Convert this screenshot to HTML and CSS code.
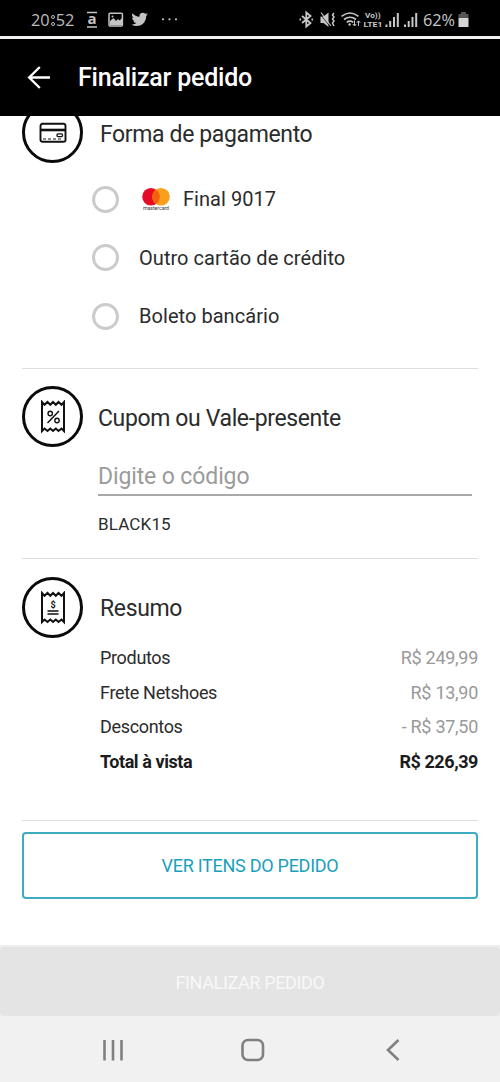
FILE: index.html
```html
<!DOCTYPE html>
<html lang="pt-BR">
<head>
<meta charset="utf-8">
<title>Finalizar pedido</title>
<link rel="stylesheet" href="styles.css">
</head>
<body>
<div class="phone">
  <div class="status">
    <span class="clock">20<span class="colon"><i></i><i></i></span>52</span>
    <svg class="status-left" width="96" height="36" viewBox="84 0 96 36">
      <path d="M87 12.5h10M87 27h10" stroke="#c4c4c4" stroke-width="1.5"/>
      <text x="92" y="24" text-anchor="middle" class="store">a</text>
      <rect x="109" y="13.2" width="13.4" height="12.8" rx="1" fill="none" stroke="#c4c4c4" stroke-width="1.5"/>
      <path d="M110 25v-4l3.5-3 2.5 3 2-2 1.6 1.5L122 18v7z" fill="#c4c4c4"/>
      <circle cx="112.5" cy="16.5" r="1" fill="#c4c4c4"/>
      <path transform="translate(131.5 11.2) scale(.68)" fill="#c4c4c4" d="M23.95 4.57a10 10 0 01-2.82.77 4.96 4.96 0 002.16-2.72c-.95.55-2 .95-3.13 1.18a4.92 4.92 0 00-8.38 4.48C7.69 8.1 4.07 6.13 1.64 3.16a4.92 4.92 0 001.52 6.57 4.9 4.9 0 01-2.23-.61v.06a4.92 4.92 0 003.95 4.83 5 5 0 01-2.21.08 4.94 4.94 0 004.6 3.42A9.87 9.87 0 010 19.54a14 14 0 007.55 2.21c9.05 0 14-7.5 14-13.98l-.02-.64a9.94 9.94 0 002.42-2.56z"/>
      <circle cx="163" cy="19.3" r="1.1" fill="#c4c4c4"/><circle cx="169.5" cy="19.3" r="1.1" fill="#c4c4c4"/><circle cx="176" cy="19.3" r="1.1" fill="#c4c4c4"/>
    </svg>
    <svg class="status-right" width="120" height="36" viewBox="298 0 120 36" fill="none" stroke="#c8c8c8">
      <path d="M302 16l8.500 7-4.200 3.500v-14l4.200 3.500-8.500 7" stroke-width="1.800"/>
      <path d="M299.500 19.500h1.500M311.500 19.500h1.500" stroke-width="1.800"/>
      <path d="M320.500 16.500h3l5-4v14.500l-5-4h-3z" fill="#c8c8c8" stroke="none"/>
      <path d="M320 14l9.500 12" stroke="#000" stroke-width=".7"/>
      <path d="M321 12.500l10 13.500" stroke-width="1.100"/>
      <path d="M334 13l-1.500 2 1.500 2-1.500 2 1.500 2-1.500 2 1.500 3" stroke-width="1.500"/>
      <path d="M341.500 16.300q8.500-6.700 17 0M344 19.500q6-4.600 12 0M346.700 22.300q3.300-2.400 6.600 0" stroke-width="1.600"/>
      <circle cx="349.600" cy="24.500" r="1.200" fill="#c8c8c8" stroke="none"/>
      <path d="M354.500 20.500v5M352.800 24l1.700 2 1.700-2M358.500 26v-5M356.800 22.800l1.700-2 1.700 2" stroke-width="1"/>
      <g fill="#c8c8c8" stroke="none">
        <text x="365" y="18.400" class="volte" textLength="15.500" lengthAdjust="spacingAndGlyphs">Vo))</text>
        <text x="363.500" y="27" class="volte" textLength="19" lengthAdjust="spacingAndGlyphs">LTE1</text>
        <path d="M385.500 24.500h2v2.500h-2zM389.200 21h2v6h-2zM393 17h2v10h-2zM396.800 13h2v14h-2zM404 24.500h2v2.500h-2zM407.700 21h2v6h-2zM411.500 17h2v10h-2zM415.200 13h2v14h-2z"/>
      </g>
    </svg>
    <span class="percent">62%</span>
    <svg class="battery" width="11" height="16" viewBox="0 0 11 16"><path d="M3 0h5v2h2.500v4H.5V2H3z" fill="#555"/><path d="M.5 6h10v9H.5z" fill="#d5d5d5"/></svg>
  </div>

  <header class="appbar">
    <svg width="24" height="24" viewBox="0 0 24 24" fill="none" stroke="#fff" stroke-width="2.400"><path d="M23 11.500H2.500M12.800 1L2.200 11.500l10.600 10.500"/></svg>
    <h1 class="title">Finalizar pedido</h1>
  </header>

  <main class="content">
    <section class="section payment">
      <div class="section-head">
        <span class="badge">
          <svg width="28" height="22" viewBox="0 0 28 22" fill="none" stroke="#111" stroke-width="1.900">
            <path d="M1.500 16V4q0-2.200 2.200-2.200h20.600q2.200 0 2.200 2.200v14q0 1.800-2.200 1.800H3.700q-2.200 0-2.200-2z"/>
            <path d="M2 8h24" stroke-width="2.600"/>
            <path d="M4 17h19" stroke-dasharray="3 2" stroke-width="1.200"/>
            <rect x="18" y="11.800" width="5.500" height="2.800" rx="1" stroke-width="1.300"/>
          </svg>
        </span>
        <h2 class="heading heading-payment">Forma de pagamento</h2>
      </div>
      <ul class="options">
        <li class="option"><span class="radio"></span>
          <svg class="card-logo" width="30" height="24" viewBox="0 0 30 24">
            <circle cx="10" cy="8.800" r="8.800" fill="#e50a26"/><circle cx="20" cy="8.800" r="8.800" fill="#f99f1b"/>
            <path d="M15 1.560a8.800 8.800 0 010 14.480 8.800 8.800 0 010-14.480z" fill="#f4600c"/>
            <text x="2" y="22.300" class="brand" textLength="26" lengthAdjust="spacingAndGlyphs">mastercard</text>
          </svg>
          <span class="label final">Final 9017</span></li>
        <li class="option"><span class="radio"></span><span class="label other">Outro cartão de crédito</span></li>
        <li class="option"><span class="radio"></span><span class="label">Boleto bancário</span></li>
      </ul>
    </section>

    <section class="section coupon">
      <div class="section-head">
        <span class="badge">
          <svg width="26" height="34" viewBox="0 0 26 34" fill="none" stroke="#111" stroke-width="2">
            <path d="M2 2l2.500 2.800L7.500 2l2.800 2.800L13 2l2.800 2.800L18.500 2l3 2.800L24 2v29l-2.500-2.500-3 2.500-2.700-2.500L13 31l-2.700-2.500L7.500 31l-3-2.500L2 31z"/>
            <path d="M19 11L7.500 23" stroke-width="1.500"/><circle cx="10.200" cy="13.500" r="2.200" stroke-width="1.400"/><circle cx="17" cy="20.500" r="2.200" stroke-width="1.400"/>
          </svg>
        </span>
        <h2 class="heading heading-coupon">Cupom ou Vale-presente</h2>
      </div>
      <div class="field">Digite o código</div>
      <p class="code">BLACK15</p>
    </section>

    <section class="section summary">
      <div class="section-head">
        <span class="badge">
          <svg width="26" height="34" viewBox="0 0 26 34" fill="none" stroke="#111" stroke-width="2">
            <path d="M2 2l2.500 2.800L7.500 2l2.800 2.800L13 2l2.800 2.800L18.500 2l3 2.800L24 2v29l-2.500-2.500-3 2.500-2.700-2.500L13 31l-2.700-2.500L7.500 31l-3-2.500L2 31z"/>
            <path d="M7.500 20h11M7.500 23h11" stroke-width="1.300"/>
            <text x="13" y="16.500" text-anchor="middle" class="dollar">$</text>
          </svg>
        </span>
        <h2 class="heading heading-summary">Resumo</h2>
      </div>
      <dl class="totals">
        <div class="row"><dt>Produtos</dt><dd>R$ 249,99</dd></div>
        <div class="row"><dt>Frete Netshoes</dt><dd>R$ 13,90</dd></div>
        <div class="row"><dt>Descontos</dt><dd>- R$ 37,50</dd></div>
        <div class="row total"><dt>Total à vista</dt><dd>R$ 226,39</dd></div>
      </dl>
    </section>
    <button class="items-button">VER ITENS DO PEDIDO</button>
  </main>

  <footer class="footer"><button class="finish-button">FINALIZAR PEDIDO</button></footer>
  <nav class="navbar">
    <svg width="500" height="66" viewBox="0 0 500 66" fill="none" stroke="#808080" stroke-width="2.600">
      <path d="M104.500 24v20.500M113 24v20.500M121.500 24v20.500"/>
      <rect x="242.500" y="24" width="20.500" height="20" rx="5.500"/>
      <path d="M398.500 24l-10.500 10 10.500 10"/>
    </svg>
  </nav>
</div>
</body>
</html>
```
FILE: styles.css
```css
* { box-sizing: border-box; }
body { margin: 0; background: #fff; font-family: Roboto, "Liberation Sans", sans-serif; color: #2b2b2b; }
h1, h2, p, ul, dl, dd { margin: 0; padding: 0; }
button { font: inherit; cursor: pointer; }
.phone { width: 500px; height: 1082px; display: flex; flex-direction: column; overflow: hidden; }

.status { height: 39px; padding-left: 31px; background: #000; border-bottom: 3px solid #f0f0f0; display: flex; align-items: flex-start; color: #c8c8c8; flex: none; }
.clock { width: 53px; height: 36px; font: 16.3px/40px "Open Sans", sans-serif; display: flex; color: #bdbdbd; }
.colon { display: flex; flex-direction: column; gap: 3px; padding: 15px 1px 0; }
.colon i { width: 4px; height: 4px; border: 1px solid #bdbdbd; border-radius: 50%; }
.status-right { margin-left: 118px; }
.percent { width: 35px; margin-left: 5px; font: 16.3px/40px "Open Sans", sans-serif; }
.battery { margin: 12px 0 0; }
.store { font: bold 15px "Open Sans", sans-serif; fill: #c4c4c4; }
.volte { font: bold 8px Roboto, sans-serif; }

.appbar { height: 77px; background: #000; display: flex; align-items: center; gap: 27px; padding-left: 27px; color: #fff; flex: none; }
.title { font-size: 25px; font-weight: 500; line-height: 30px; letter-spacing: -.22px; }

.content { height: 829px; padding: 0 22px; overflow: hidden; flex: none; }
.section { border-bottom: 1px solid #dedede; }
.payment { height: 267px; margin-top: -14px; }
.coupon { height: 190px; padding-top: 17px; }
.summary { height: 262px; padding-top: 18px; }
.section-head { display: flex; height: 61px; align-items: center; gap: 17px; }
.badge { width: 61px; height: 61px; border: 3px solid #0a0a0a; border-radius: 50%; display: grid; place-items: center; flex: none; }
.heading { font-size: 23px; font-weight: 400; line-height: 30px; padding-top: 5px; letter-spacing: -.37px; }
.heading-coupon { margin-left: -2px; }
.heading-summary { padding-top: 3px; }

.options { list-style: none; padding: 7px 0 0 70px; }
.option { height: 58.5px; display: flex; align-items: center; }
.radio { width: 27px; height: 27px; border: 3px solid #cbcbcb; border-radius: 50%; margin-right: 20px; }
.label { font-size: 20px; letter-spacing: .05px; }
.card-logo { margin: 2px 12px 0 2px; }
.brand { font: 5px Roboto, sans-serif; fill: #333; }
.field { margin: 12px 6px 0 76px; height: 37px; border-bottom: 2px solid #a9a9a9; font-size: 23px; line-height: 36px; letter-spacing: -.12px; color: #9b9b9b; }
.code { margin: 18px 0 0 76px; font-size: 17px; line-height: 20px; letter-spacing: .15px; }
.dollar { font: bold 9px Roboto, sans-serif; fill: #111; stroke: none; }

.totals { padding: 2px 0 0 78px; }
.row { height: 34.7px; display: flex; justify-content: space-between; align-items: center; font-size: 18px; letter-spacing: -.33px; }
.row dd { color: #999; letter-spacing: -.28px; }
.total dt, .total dd { font-weight: 700; color: #1c1c1c; letter-spacing: -.42px; }
.items-button { display: block; width: 456px; height: 67px; margin-top: 11px; border: 2px solid #3eabc0; border-radius: 4px; background: #fff; color: #1a9fbd; font-size: 18px; letter-spacing: -.27px; }

.footer { height: 71px; background: #ededed; flex: none; padding-top: 2px; }
.finish-button { display: block; width: 500px; height: 69px; padding-top: 2px; border: 0; border-radius: 5px; background: #e4e4e4; color: #f8f8f8; font-size: 18px; letter-spacing: -.36px; }
.navbar { height: 66px; background: #f1f1f1; flex: none; }
.navbar svg { display: block; }
```
